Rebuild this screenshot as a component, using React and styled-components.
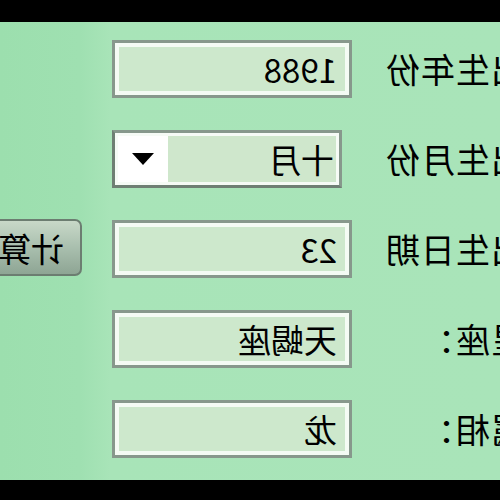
import React from 'react'
import styled, { createGlobalStyle } from 'styled-components';

const GlobalStyle = createGlobalStyle`
  html, body {
    margin: 0;
    padding: 0;
    background: #000;
  }
`;

const rows = [
  { label: '出生年份', value: '1988' },
  { label: '出生月份', value: '十月', select: true },
  { label: '出生日期', value: '23', button: '计算' },
  { label: '星座：', value: '天蝎座' },
  { label: '属相：', value: '龙' },
];

const App = () => {
  return (
    <StFrame>
      <GlobalStyle />
      <StBar $h={22} />
      <StPanel>
        <StForm>
          {rows.map((row) => (
            <React.Fragment key={row.label}>
              <StLabel>{row.label}</StLabel>
              {row.select ? (
                <StSelect>
                  <StSelectText>{row.value}</StSelectText>
                  <StArrowBox>
                    <StArrow />
                  </StArrowBox>
                </StSelect>
              ) : (
                <StInput>{row.value}</StInput>
              )}
              {row.button ? <StBtn>{row.button}</StBtn> : <span />}
            </React.Fragment>
          ))}
        </StForm>
      </StPanel>
      <StBar $h={20} />
    </StFrame>
  )
}

const StFrame = styled.div`
  display: flex;
  flex-direction: column;
  width: 500px;
  height: 500px;
  overflow: hidden;
  font-family: "Noto Sans CJK SC", "Noto Sans", sans-serif;
`;

const StBar = styled.div`
  height: ${(p) => p.$h}px;
  background: #000;
  flex-shrink: 0;
`;

/* the screenshot is mirrored left-right, so the whole panel is flipped */
const StPanel = styled.div`
  flex: 1;
  overflow: hidden;
  transform: scaleX(-1);
  background: linear-gradient(90deg, #a9e4b9 0%, #a8e4b8 78%, #9fe0b1 84%, #9cdfae 100%);
`;

const StForm = styled.div`
  display: grid;
  grid-template-columns: 148px 240px 104px;
  grid-auto-rows: 58px;
  column-gap: 30px;
  row-gap: 32px;
  align-items: center;
  margin-left: -30px;
  padding-top: 18px;
`;

const StLabel = styled.div`
  padding-left: 5px;
  font-size: 34px;
  line-height: 1;
  color: #000;
  letter-spacing: 1px;
  white-space: nowrap;
`;

const StInput = styled.div`
  box-sizing: border-box;
  height: 58px;
  display: flex;
  align-items: center;
  padding: 0 12px;
  border: 3px solid #87988c;
  box-shadow: inset 0 0 0 4px #f4fbf4;
  background: #cde8cc;
  font-size: 33px;
  color: #000;
`;

const StSelect = styled.div`
  box-sizing: border-box;
  justify-self: end;
  width: 230px;
  height: 58px;
  display: flex;
  border: 3px solid #87988c;
  border-right-color: #6f7f74;
  border-bottom-color: #6f7f74;
  background: #f6fbf6;
  padding: 3px;
`;

const StSelectText = styled.div`
  flex: 1;
  display: flex;
  align-items: center;
  padding-left: 2px;
  background: #cfe7cc;
  font-size: 33px;
  color: #000;
`;

const StArrowBox = styled.div`
  width: 50px;
  display: flex;
  align-items: center;
  justify-content: center;
  background: #fff;
`;

const StArrow = styled.div`
  width: 0;
  height: 0;
  border-left: 11px solid transparent;
  border-right: 11px solid transparent;
  border-top: 12px solid #000;
`;

const StBtn = styled.button`
  box-sizing: border-box;
  height: 57px;
  margin-top: -3px;
  padding: 0 0 0 16px;
  text-align: left;
  border: 2px solid #6c7d71;
  border-radius: 7px;
  background: linear-gradient(180deg, #c8d8c8 0%, #a9bfae 50%, #8ea594 100%);
  color: #000;
  font-family: "Noto Sans CJK SC", sans-serif;
  font-size: 33px;
  white-space: nowrap;
`;

export default App;
